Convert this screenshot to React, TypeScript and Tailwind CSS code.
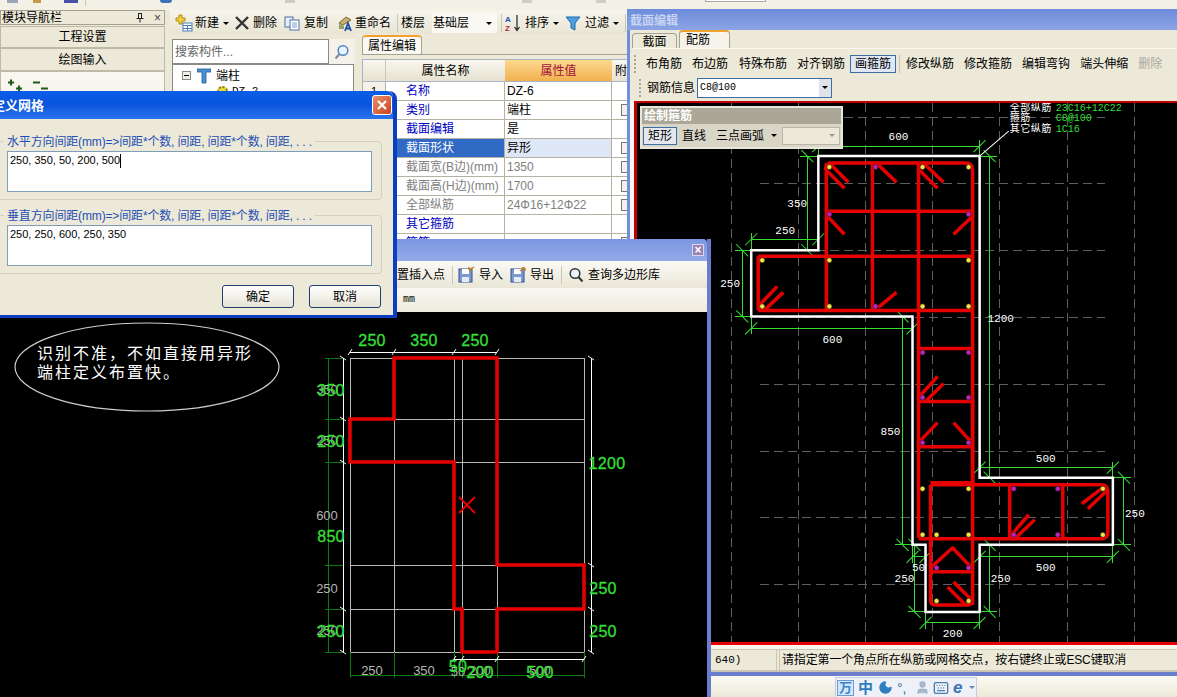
import { Keyboard, Moon, User } from "lucide-react";

const GREEN = "#35dd35";
const RED = "#e60000";

function Arrow() {
  return <div className="h-0 w-0 border-x-[3px] border-t-[3px] border-x-transparent border-t-black" />;
}

function Sep({ className = "" }: { className?: string }) {
  return <div className={`h-[18px] w-px shrink-0 bg-[#c9c6b4] ${className}`} />;
}

function Gripper() {
  return <div className="h-[18px] w-[2px] shrink-0 border-l-2 border-dotted border-[#a8a694]" />;
}

/* toolbar icons */
function NewIcon() {
  return (
    <svg width="18" height="18" viewBox="0 0 18 18">
      <path d="M4 1h3v3h3v3H7v3H4V7H1V4h3z" fill="#f4d03f" stroke="#b08a10" />
      <rect x="8" y="9" width="9" height="8" fill="#fff" stroke="#4a7fb5" />
      <path d="M8 11.500h9M8 14.500h9M12.500 11.500v5" stroke="#4a7fb5" />
    </svg>
  );
}

function DeleteIcon() {
  return (
    <svg width="14" height="14" viewBox="0 0 14 14">
      <path d="M1 1l12 12M13 1L1 13" stroke="#333" strokeWidth="2.4" />
    </svg>
  );
}

function CopyIcon() {
  return (
    <svg width="16" height="15" viewBox="0 0 16 15">
      <rect x="1" y="1" width="8" height="10" fill="#e8eefb" stroke="#4a6fa5" />
      <rect x="6" y="4" width="9" height="10" fill="#fff" stroke="#4a6fa5" />
      <path d="M8 7h5M8 9h5M8 11h5" stroke="#7d9bc8" />
    </svg>
  );
}

function RenameIcon() {
  return (
    <svg width="17" height="17" viewBox="0 0 17 17">
      <path d="M3 8l7-6 5 3-8 5z" fill="#c9b36a" stroke="#7a6a30" />
      <path d="M3 9l5 2v3H3z" fill="#8da06a" />
      <path d="M9 16l3-8 3 8M10 13.500h4" stroke="#1f4fa5" strokeWidth="1.800" fill="none" />
    </svg>
  );
}

function SortIcon() {
  return (
    <svg width="16" height="18" viewBox="0 0 16 18">
      <text x="0" y="8" fontSize="8" fontWeight="700" fill="#2050b0" fontFamily="Liberation Sans, sans-serif">A</text>
      <text x="0" y="17" fontSize="8" fontWeight="700" fill="#b03030" fontFamily="Liberation Sans, sans-serif">Z</text>
      <path d="M12 1v15M9.500 13l2.500 3.500 2.500-3.500" stroke="#222" strokeWidth="1.200" fill="none" />
    </svg>
  );
}

function FunnelIcon() {
  return (
    <svg width="16" height="15" viewBox="0 0 16 15">
      <path d="M1 1h14L10 7v7L6 12V7z" fill="#4aa0e0" stroke="#1d6aa5" />
    </svg>
  );
}

function FloppyIcon({ out }: { out?: boolean }) {
  return (
    <svg width="17" height="17" viewBox="0 0 17 17">
      <rect x="1" y="3" width="13" height="13" fill="#7d9ad0" stroke="#2f4d8a" />
      <rect x="4" y="3" width="7" height="5" fill="#fff" />
      <rect x="4" y="11" width="7" height="5" fill="#e6ebf5" />
      <path d={out ? "M10 5l5-3M15 2h-3M15 2v3" : "M16 1l-5 3M11 4h3M11 4V1"} stroke="#c07820" strokeWidth="1.300" fill="none" />
    </svg>
  );
}

function LensIcon({ ring = "#333", handle = "#333" }: { ring?: string; handle?: string }) {
  return (
    <svg width="16" height="16" viewBox="0 0 16 16">
      <circle cx="9" cy="6.500" r="4.800" fill="#eaf3fb" stroke={ring} strokeWidth="1.500" />
      <path d="M5.500 10L1.500 14.500" stroke={handle} strokeWidth="2" />
    </svg>
  );
}

function TopStrip() {
  return (
    <div className="relative h-[10px] shrink-0 bg-[#f3f1e6]">
      <div className="absolute left-[7px] top-0 h-[3px] w-[11px] bg-[#9aa6b8]" />
      <div className="absolute left-[33px] top-0 h-[3px] w-[8px] bg-[#c49a48]" />
      <div className="absolute left-[64px] top-0 h-[3px] w-[14px] bg-[#4a50a8]" />
      <div className="absolute left-[85px] top-0 h-[6px] w-px bg-[#c9c6b4]" />
      <div className="absolute left-[160px] top-0 h-[3px] w-[12px] rounded-b bg-[#3b74b5]" />
      <div className="absolute left-[285px] top-0 h-[3px] w-[10px] bg-[#cfcdc2]" />
      <div className="absolute left-[522px] top-0 h-[3px] w-[10px] bg-[#cfcdc2]" />
      <div className="absolute left-[596px] top-0 h-[3px] w-[10px] bg-[#cfcdc2]" />
      <div className="absolute left-[705px] top-0 h-[2px] w-[61px] border-b border-x border-[#aaa] bg-white" />
    </div>
  );
}

function NavPanel() {
  return (
    <div className="flex w-[165px] shrink-0 flex-col">
      <div className="flex h-[15px] items-center border border-[#a5a290] bg-[#ece9d8] pl-px text-[12px] leading-none">
        <span className="flex-1">模块导航栏</span>
        <svg className="mr-[10px]" width="8" height="10" viewBox="0 0 8 10">
          <path d="M2 0.500h4M2.500 0.500v5M5.500 0.500v5M0.500 5.500h7M4 5.500v4" stroke="#222" fill="none" />
        </svg>
        <span className="mr-[3px] text-[12px] text-[#444]">×</span>
      </div>
      <div className="mt-px flex h-[22px] items-center justify-center border border-[#bdbaa6] bg-[#ece9d8] text-[12px] leading-none">工程设置</div>
      <div className="flex h-[23px] items-center justify-center border border-[#bdbaa6] bg-[#ece9d8] text-[12px] leading-none">绘图输入</div>
      <div className="flex flex-1 gap-[7px] border border-[#bdbaa6] bg-gradient-to-b from-[#f8f6ee] to-[#ece9d8] pl-[6px] pt-[6px]">
        <svg width="18" height="16" viewBox="0 0 18 16">
          <path d="M1 4.500h6M4 1.500v6M9 10.500h6M12 7.500v6" stroke="#1e5a1e" strokeWidth="2" />
        </svg>
        <svg width="18" height="16" viewBox="0 0 18 16">
          <path d="M1 4.500h7M9 10.500h7" stroke="#1e5a1e" strokeWidth="2" />
        </svg>
      </div>
    </div>
  );
}

function MainToolbar() {
  return (
    <div className="flex h-[24px] shrink-0 items-center bg-gradient-to-b from-[#f7f5ec] to-[#e8e5d4] pl-[5px] pt-[2px] text-[12px] leading-none">
      <NewIcon />
      <span className="ml-[2px]">新建</span>
      <div className="ml-[4px]"><Arrow /></div>
      <div className="ml-[6px]"><DeleteIcon /></div>
      <span className="ml-[4px]">删除</span>
      <div className="ml-[7px]"><CopyIcon /></div>
      <span className="ml-[4px]">复制</span>
      <div className="ml-[8px]"><RenameIcon /></div>
      <span className="ml-[2px]">重命名</span>
      <Sep className="ml-[6px]" />
      <span className="ml-[3px]">楼层</span>
      <div className="ml-[7px] flex h-[20px] w-[65px] items-center justify-between bg-[#f9f8f2] pl-px pr-[5px]">
        <span>基础层</span>
        <Arrow />
      </div>
      <Sep className="ml-[4px]" />
      <div className="ml-[3px]"><SortIcon /></div>
      <span className="ml-[4px]">排序</span>
      <div className="ml-[4px]"><Arrow /></div>
      <div className="ml-[6px]"><FunnelIcon /></div>
      <span className="ml-[4px]">过滤</span>
      <div className="ml-[4px]"><Arrow /></div>
      <Sep className="ml-[6px]" />
    </div>
  );
}

function TreePanel() {
  return (
    <div className="flex w-[187px] shrink-0 flex-col pl-[2px] pt-[5px]">
      <div className="flex h-[25px] items-stretch">
        <div className="flex w-[157px] items-center border border-[#8a8a80] bg-white pl-[2px] text-[12px] leading-none text-[#666]">搜索构件...</div>
        <div className="flex w-[26px] items-center justify-center bg-[#f4f2e8]">
          <LensIcon ring="#4a88c8" handle="#7a8a9a" />
        </div>
      </div>
      <div className="mr-[3px] flex-1 border border-[#8a8a80] bg-white pl-[9px] pt-[3px] text-[12px] leading-none">
        <div className="flex h-[15px] items-center">
          <div className="flex h-[9px] w-[9px] items-center justify-center border border-[#888] bg-[#f0efe8]">
            <div className="h-px w-[5px] bg-black" />
          </div>
          <svg className="ml-[6px]" width="14" height="16" viewBox="0 0 14 16">
            <path d="M0 1h14v3H9v11H5V4H0z" fill="#4a90d0" stroke="#1c5a96" strokeWidth="0.800" />
          </svg>
          <span className="ml-[5px]">端柱</span>
        </div>
        <div className="ml-[35px] mt-[1px] flex h-[15px] items-center">
          <div className="h-[11px] w-[11px] rounded-full border-2 border-dotted border-[#8a7a10] bg-[#e8d840]" />
          <span className="ml-[4px] font-['Liberation_Mono',monospace] text-[11px]">DZ-2</span>
        </div>
      </div>
    </div>
  );
}

const PROPERTY_ROWS = [
  { name: "名称", value: "DZ-6", kind: "link", check: false },
  { name: "类别", value: "端柱", kind: "link", check: true },
  { name: "截面编辑", value: "是", kind: "link", check: false },
  { name: "截面形状", value: "异形", kind: "selected", check: true },
  { name: "截面宽(B边)(mm)", value: "1350", kind: "muted", check: true },
  { name: "截面高(H边)(mm)", value: "1700", kind: "muted", check: true },
  { name: "全部纵筋", value: "24Φ16+12Φ22", kind: "muted", check: true },
  { name: "其它箍筋", value: "", kind: "link", check: false },
  { name: "箍筋", value: "", kind: "link", check: true },
];

function PropertyPanel() {
  return (
    <div className="flex flex-1 flex-col pl-[5px] pt-px text-[12px] leading-none">
      <div className="flex h-[20px] border-b border-[#a5a290]">
        <div className="flex w-[60px] items-center justify-center rounded-t border border-b-0 border-[#a5a290] border-t-2 border-t-[#f0a030] bg-[#f9f8f2]">属性编辑</div>
      </div>
      <div className="mt-[4px] flex h-[23px] border-y border-l border-[#a9b4c4]">
        <div className="w-[23px] border-r border-[#c9c6b4] bg-gradient-to-b from-[#f8f6ee] to-[#e6e3d2]" />
        <div className="flex w-[119px] items-center justify-center bg-gradient-to-b from-[#f8f6ee] to-[#e6e3d2]">属性名称</div>
        <div className="flex w-[107px] items-center justify-center bg-gradient-to-b from-[#fbd98f] to-[#f2b04e] text-[#a0103a]">属性值</div>
        <div className="flex flex-1 items-center bg-gradient-to-b from-[#f8f6ee] to-[#e6e3d2] pl-[3px]">附加</div>
      </div>
      {PROPERTY_ROWS.map((row, i) => (
        <div key={row.name} className="flex h-[19px] border-b border-l border-[#b4b2a4] bg-white">
          <div className="flex w-[23px] items-center justify-center border-r border-[#b4b2a4] bg-[#f4f2e8] text-[11px]">{i + 1}</div>
          <div
            className={
              row.kind === "selected"
                ? "flex w-[119px] items-center border-r border-[#b4b2a4] bg-[#316ac5] pl-[20px] text-white"
                : row.kind === "muted"
                  ? "flex w-[119px] items-center border-r border-[#b4b2a4] pl-[20px] text-[#808080]"
                  : "flex w-[119px] items-center border-r border-[#b4b2a4] pl-[20px] text-[#0000c0]"
            }
          >
            {row.name}
          </div>
          <div
            className={
              row.kind === "selected"
                ? "flex w-[107px] items-center border-r border-[#b4b2a4] bg-[#dde7f5] pl-[2px]"
                : row.kind === "muted"
                  ? "flex w-[107px] items-center border-r border-[#b4b2a4] pl-[2px] text-[#808080]"
                  : "flex w-[107px] items-center border-r border-[#b4b2a4] pl-[2px]"
            }
          >
            {row.value}
          </div>
          <div className="flex flex-1 items-center pl-[9px]">
            {row.check && <div className="h-[12px] w-[12px] shrink-0 border border-[#777] bg-[#f4f2e8]" />}
          </div>
        </div>
      ))}
    </div>
  );
}

/* dimension line in the rebar drawing: ext is where the witness lines stop */
const RIGHT_DIMS = [
  { x1: 818, y1: 147, x2: 979, y2: 147, ext: 157 },
  { x1: 807, y1: 157, x2: 807, y2: 251, ext: 818 },
  { x1: 751, y1: 240, x2: 818, y2: 240, ext: 251 },
  { x1: 742, y1: 251, x2: 742, y2: 317, ext: 751 },
  { x1: 751, y1: 329, x2: 912, y2: 329, ext: 317 },
  { x1: 989, y1: 157, x2: 989, y2: 478, ext: 979 },
  { x1: 902, y1: 317, x2: 902, y2: 545, ext: 912 },
  { x1: 979, y1: 468, x2: 1112, y2: 468, ext: 478 },
  { x1: 1123, y1: 478, x2: 1123, y2: 545, ext: 1112 },
  { x1: 979, y1: 557, x2: 1112, y2: 557, ext: 545 },
  { x1: 912, y1: 557, x2: 925, y2: 557, ext: 545 },
  { x1: 914, y1: 545, x2: 914, y2: 612, ext: 925 },
  { x1: 989, y1: 545, x2: 989, y2: 612, ext: 979 },
  { x1: 925, y1: 623, x2: 979, y2: 623, ext: 612 },
];

const RIGHT_LABELS = [
  ["600", 898, 141],
  ["350", 797, 208],
  ["250", 785, 235],
  ["250", 730, 288],
  ["600", 832, 344],
  ["1200", 1000, 323],
  ["850", 890, 435],
  ["500", 1045, 462],
  ["250", 1134, 517],
  ["500", 1045, 571],
  ["50", 918, 571],
  ["250", 904, 582],
  ["250", 1000, 582],
  ["200", 952, 637],
] as const;

const STIRRUPS = [
  "M825 171Q825 164 832 164H965Q972 164 972 171V485M826 164V311M872 164V311M918 164V538M826 212H972M758 257H972M758 311H972M758 257V311",
  "M918 349H972M918 402H972M918 447H972M972 400V605M930 483H972M930 485H1100Q1107 485 1107 492V532Q1107 539 1100 539H918M1009 485V539M1062 485V539M930 485V600Q930 605 935 605H967Q972 605 972 600M930 572H972",
  "M828 163L848 183M827 172L844 189M875 163L896 183M922 163L943 183M919 171L937 189M827 217L844 235M972 217L953 235M758 307L777 287M765 310L783 293M878 308L896 293",
  "M918 398L937 377M925 402L943 384M918 443L937 423M971 443L953 423M1102 488L1081 504M1107 490L1087 509M1009 537L1028 515M1015 538L1034 520M930 568L952 548L971 568M947 587L965 605M953 582L971 600",
];

const YELLOW_DOTS = [
  [829, 168], [922, 168], [968, 168], [762, 261], [829, 261], [968, 261], [762, 307], [829, 307], [922, 307], [968, 307],
  [922, 489], [968, 489], [1102, 489], [922, 535], [936, 535], [968, 535], [1102, 535], [936, 601], [968, 601],
];
const MAGENTA_DOTS = [
  [875, 168], [829, 215], [968, 215], [875, 307], [922, 353], [968, 353], [922, 398], [968, 398], [922, 443], [968, 443],
  [1013, 489], [1057, 489], [1013, 535], [1057, 535], [936, 568], [968, 568],
];

function RebarDrawing() {
  const grid = [731, 798, 865, 932, 999, 1067, 1134];
  const rows = [118, 184, 251, 318, 385, 452, 518, 585];
  return (
    <svg className="block h-full w-full" viewBox="637 104 540 538" preserveAspectRatio="xMinYMin slice">
      <g stroke="#5f5f5f" strokeDasharray="9 5" shapeRendering="crispEdges">
        {grid.map((x) => <line key={x} x1={x} y1={104} x2={x} y2={642} />)}
        {rows.map((y) => <line key={y} x1={760} y1={y} x2={1104} y2={y} />)}
      </g>
      <g stroke={GREEN} shapeRendering="crispEdges">
        {RIGHT_DIMS.map((d) => {
          const horizontal = d.y1 === d.y2;
          return (
            <g key={`${d.x1}-${d.y1}-${d.x2}`}>
              <line x1={d.x1} y1={d.y1} x2={d.x2} y2={d.y2} />
              {horizontal ? (
                <>
                  <line x1={d.x1} y1={d.y1 + (d.ext > d.y1 ? -6 : 6)} x2={d.x1} y2={d.ext} />
                  <line x1={d.x2} y1={d.y1 + (d.ext > d.y1 ? -6 : 6)} x2={d.x2} y2={d.ext} />
                </>
              ) : (
                <>
                  <line x1={d.x1 + (d.ext > d.x1 ? -7 : 7)} y1={d.y1} x2={d.ext} y2={d.y1} />
                  <line x1={d.x1 + (d.ext > d.x1 ? -7 : 7)} y1={d.y2} x2={d.ext} y2={d.y2} />
                </>
              )}
            </g>
          );
        })}
      </g>
      <g stroke={GREEN}>
        {RIGHT_DIMS.map((d) => {
          const horizontal = d.y1 === d.y2;
          const k = `${d.x1}-${d.y1}-${d.x2}`;
          return horizontal ? (
            <g key={k}>
              <line x1={d.x1 - 6} y1={d.y1 + 6} x2={d.x1 + 6} y2={d.y1 - 6} />
              <line x1={d.x2 - 6} y1={d.y2 + 6} x2={d.x2 + 6} y2={d.y2 - 6} />
            </g>
          ) : (
            <g key={k}>
              <line x1={d.x1 - 6} y1={d.y1 - 6} x2={d.x1 + 6} y2={d.y1 + 6} />
              <line x1={d.x2 - 6} y1={d.y2 - 6} x2={d.x2 + 6} y2={d.y2 + 6} />
            </g>
          );
        })}
      </g>
      <path d="M818 157H979V478H1112V545H979V612H925V545H912V317H751V251H818Z" fill="none" stroke="#fff" strokeWidth="2.500" />
      <g fill="none" stroke={RED} strokeWidth="3.500" strokeLinejoin="round">
        {STIRRUPS.map((d) => <path key={d} d={d} />)}
      </g>
      {YELLOW_DOTS.map(([x, y]) => <circle key={`y${x}-${y}`} cx={x} cy={y} r="2.500" fill="#f5e642" stroke="#222" strokeWidth="0.600" />)}
      {MAGENTA_DOTS.map(([x, y]) => <circle key={`m${x}-${y}`} cx={x} cy={y} r="2.500" fill="#c020c0" stroke="#222" strokeWidth="0.600" />)}
      <path d="M979 157L1008 132" stroke="#fff" />
      <g fill="#fff" className="font-['Liberation_Mono',monospace] text-[11px]" textAnchor="middle">
        {RIGHT_LABELS.map(([t, x, y]) => <text key={`${t}-${x}-${y}`} x={x} y={y}>{t}</text>)}
      </g>
      <g fill="#fff" className="font-['Noto_Sans_CJK_SC',sans-serif] text-[10px]" letterSpacing="0.500">
        <text x={1009} y={112}>全部纵筋</text>
        <text x={1009} y={122}>箍筋</text>
        <text x={1009} y={133}>其它纵筋</text>
      </g>
      <g fill={GREEN} className="font-['Liberation_Mono',monospace] text-[10px]">
        <text x={1055} y={112}>23C16+12C22</text>
        <text x={1055} y={122}>C8@100</text>
        <text x={1055} y={133}>1C16</text>
      </g>
    </svg>
  );
}

const GRID_X = [350, 394, 454, 462, 497, 584];
const GRID_Y = [358, 419, 462, 565, 609, 652];

const GREEN_TEXT = [
  ["250", 372, 346], ["350", 424, 346], ["250", 475, 346],
  ["350", 331, 396], ["250", 331, 447], ["850", 331, 542], ["250", 331, 637],
  ["1200", 607, 469], ["250", 603, 594], ["250", 603, 637],
  ["50", 458, 672], ["200", 480, 678], ["500", 540, 678],
] as const;

const GREY_TEXT = [
  ["350", 327, 394], ["250", 327, 445], ["600", 327, 520], ["250", 327, 593], ["250", 327, 635],
  ["250", 372, 675], ["350", 424, 675], ["50", 458, 676], ["200", 480, 675], ["500", 540, 675],
] as const;

function PolygonDrawing() {
  return (
    <svg className="block h-full w-full" viewBox="0 312 707 385">
      <ellipse cx="147" cy="367" rx="132" ry="44" fill="none" stroke="#ccc" strokeWidth="1.200" />
      <g fill="#fff" className="font-['Noto_Sans_CJK_SC',sans-serif] text-[16px]" letterSpacing="2">
        <text x="37" y="359">{"识别不准\uFF0C不如直接用异形"}</text>
        <text x="37" y="378">端柱定义布置快。</text>
      </g>
      <g stroke="#b8b8b8" shapeRendering="crispEdges">
        {GRID_X.map((x) => <line key={x} x1={x} y1={358} x2={x} y2={652} />)}
        {GRID_Y.map((y) => <line key={y} x1={350} y1={y} x2={584} y2={y} />)}
      </g>
      <g stroke="#0c7a0c" shapeRendering="crispEdges">
        <line x1={328} y1={358} x2={328} y2={652} />
        <line x1={350} y1={675} x2={584} y2={675} />
        {GRID_Y.map((y) => <line key={y} x1={325} y1={y} x2={343} y2={y} />)}
        {[350, 394, 454, 462, 497, 584].map((x) => <line key={x} x1={x} y1={652} x2={x} y2={678} />)}
      </g>
      <g stroke="#fff" shapeRendering="crispEdges">
        <line x1={350} y1={352} x2={497} y2={352} />
        <line x1={454} y1={659} x2={584} y2={659} />
        <line x1={343} y1={358} x2={343} y2={652} />
        <line x1={591} y1={358} x2={591} y2={652} />
      </g>
      <g stroke="#fff">
        {[350, 394, 454, 497].map((x) => <line key={x} x1={x - 2} y1={355} x2={x + 2} y2={349} />)}
        {[454, 462, 497, 584].map((x) => <line key={x} x1={x - 2} y1={662} x2={x + 2} y2={656} />)}
        {[358, 419, 462, 609, 652].map((y) => <line key={y} x1={340} y1={y - 2} x2={346} y2={y + 2} />)}
        {[358, 565, 609, 652].map((y) => <line key={y} x1={588} y1={y - 2} x2={594} y2={y + 2} />)}
      </g>
      <path d="M394 358H497V565H584V609H497V652H462V609H454V462H350V419H394Z" fill="none" stroke={RED} strokeWidth="3.500" />
      <path d="M459 497L475 513M475 497L459 513" stroke={RED} strokeWidth="2" />
      <g fill="#b5b5b5" className="font-['Liberation_Sans',sans-serif] text-[13px]" textAnchor="middle">
        {GREY_TEXT.map(([t, x, y]) => <text key={`${t}-${x}-${y}`} x={x} y={y}>{t}</text>)}
      </g>
      <g fill={GREEN} stroke={GREEN} strokeWidth="0.350" className="font-['Liberation_Sans',sans-serif] text-[16px]" textAnchor="middle" letterSpacing="0.300">
        {GREEN_TEXT.map(([t, x, y]) => <text key={`${t}-${x}-${y}`} x={x} y={y}>{t}</text>)}
      </g>
    </svg>
  );
}

function PolygonWindow() {
  return (
    <div className="absolute bottom-0 left-0 top-[239px] flex w-[711px] flex-col border-r-4 border-[#6a7ccc] text-[12px] leading-none">
      <div className="flex h-[22px] shrink-0 items-center justify-end rounded-tr bg-gradient-to-b from-[#7b96e2] to-[#94aae8] pr-[3px]">
        <div className="flex h-[12px] w-[12px] items-center justify-center border border-[#d8d8ec] bg-[#9a80b8] text-[12px] font-bold text-white">×</div>
      </div>
      <div className="flex h-[27px] shrink-0 items-center bg-gradient-to-b from-[#fbfaf4] to-[#e9e6d6] pl-[397px]">
        <span>置插入点</span>
        <Sep className="ml-[7px]" />
        <div className="ml-[5px]"><FloppyIcon /></div>
        <span className="ml-[4px]">导入</span>
        <div className="ml-[7px]"><FloppyIcon out /></div>
        <span className="ml-[3px]">导出</span>
        <Sep className="ml-[7px]" />
        <div className="ml-[6px] -scale-x-100"><LensIcon /></div>
        <span className="ml-[4px]">查询多边形库</span>
      </div>
      <div className="flex h-[24px] shrink-0 items-center bg-gradient-to-b from-[#f9f8f2] to-[#eeebdc] pl-[403px] font-['Liberation_Mono',monospace] text-[10px]">mm</div>
      <div className="min-h-0 flex-1 bg-black">
        <PolygonDrawing />
      </div>
    </div>
  );
}

function GridGroup({ legend, value, caret }: { legend: string; value: string; caret?: boolean }) {
  return (
    <div className="relative -ml-[3px] h-[59px] w-[385px] rounded border border-[#d3d0bf] pl-[9px] pt-[9px]">
      <div className="absolute -top-[7px] left-[6px] bg-[#ece9d8] px-[3px] text-[12px] leading-[14px] tracking-[-0.15px] whitespace-nowrap text-[#1f4fb5]">{legend}</div>
      <div className="flex h-[41px] w-[365px] items-start border border-[#7f9db9] bg-white pl-[2px] pt-[2px] text-[11px] leading-[13px]">
        <span>{value}</span>
        {caret && <div className="h-[14px] w-px bg-black" />}
      </div>
    </div>
  );
}

function GridDialog() {
  return (
    <div className="absolute left-0 top-[91px] flex h-[227px] w-[397px] flex-col rounded-tr-lg border-b-[3px] border-r-[4px] border-[#0a3fc0] bg-[#ece9d8]">
      <div className="flex h-[28px] shrink-0 items-center justify-between overflow-hidden rounded-tr-md bg-gradient-to-b from-[#0a5de8] via-[#0a55dc] to-[#2a74ee] pr-[1px]">
        <span className="-ml-[8px] text-[13px] font-bold leading-none text-white">定义网格</span>
        <div className="flex h-[20px] w-[20px] items-center justify-center rounded-[3px] border border-white bg-gradient-to-br from-[#e8906a] to-[#c8401c]">
          <svg width="12" height="12" viewBox="0 0 12 12">
            <path d="M2 2l8 8M10 2l-8 8" stroke="#fff" strokeWidth="2.200" />
          </svg>
        </div>
      </div>
      <div className="mt-[22px] flex flex-col gap-[15px]">
        <GridGroup legend="水平方向间距(mm)=>间距*个数, 间距, 间距*个数, 间距, . . ." value="250, 350, 50, 200, 500" caret />
        <GridGroup legend="垂直方向间距(mm)=>间距*个数, 间距, 间距*个数, 间距, . . ." value="250, 250, 600, 250, 350" />
      </div>
      <div className="mt-[11px] flex justify-end gap-[15px] pr-[12px]">
        <div className="flex h-[23px] w-[72px] items-center justify-center rounded-[3px] border border-[#1f3f6f] bg-gradient-to-b from-white to-[#e6e3d6] text-[12px] leading-none">确定</div>
        <div className="flex h-[23px] w-[72px] items-center justify-center rounded-[3px] border border-[#1f3f6f] bg-gradient-to-b from-white to-[#e6e3d6] text-[12px] leading-none">取消</div>
      </div>
    </div>
  );
}

function SectionToolbar() {
  return (
    <div className="flex h-[28px] shrink-0 items-center gap-[10px] pl-[1px] pt-[2px] text-[12px] leading-none">
      <Gripper />
      <span>布角筋</span>
      <span>布边筋</span>
      <span className="ml-px">特殊布筋</span>
      <span>对齐钢筋</span>
      <span className="-ml-[5px] flex h-[18px] items-center border border-[#3a6ea5] bg-[#dfe7f3] px-[4px]">画箍筋</span>
      <Sep className="-ml-[7px] -mr-[4px]" />
      <span>修改纵筋</span>
      <span>修改箍筋</span>
      <span>编辑弯钩</span>
      <span>端头伸缩</span>
      <span className="text-[#a8a8a0]">删除</span>
    </div>
  );
}

function HoopBox() {
  return (
    <div className="absolute left-[3px] top-[3px] h-[43px] w-[203px] border-2 border-[#e8e6da] bg-[#d9d6c8] text-[12px] leading-none">
      <div className="flex h-[16px] items-center bg-[#aaa796] pl-[2px] font-bold text-white">绘制箍筋</div>
      <div className="flex h-[23px] items-center pl-[1px]">
        <span className="flex h-[18px] w-[34px] items-center justify-center border border-[#3a6ea5] bg-[#e4e8ee]">矩形</span>
        <span className="ml-[5px]">直线</span>
        <span className="ml-[10px]">三点画弧</span>
        <div className="ml-[7px]"><Arrow /></div>
        <div className="ml-[5px] flex h-[18px] w-[58px] items-center justify-end border border-[#b8b6a8] bg-[#ece9d8] pr-[4px]">
          <div className="h-0 w-0 border-x-[3px] border-t-[3px] border-x-transparent border-t-[#999]" />
        </div>
      </div>
    </div>
  );
}

function ImeBar() {
  return (
    <div className="ml-[835px] flex h-[20px] w-[142px] items-center border border-b-0 border-[#c4ccdf] bg-[#eef1f8] pl-px">
      <div className="flex h-[16px] w-[17px] items-center justify-center border border-[#6a9bd8] bg-[#d5e6fa] text-[13px] font-bold leading-none text-[#3a86c8]">万</div>
      <span className="ml-[4px] w-[15px] text-[15px] font-bold leading-none text-[#2f7ebf]">中</span>
      <Moon size={15} className="ml-[5px] fill-[#2f7ebf] text-[#2f7ebf]" />
      <span className="ml-[4px] w-[14px] text-[14px] leading-none text-[#2f6ea0]">°,</span>
      <User size={15} className="ml-[4px] fill-[#aabccf] text-[#9db0c4]" />
      <Keyboard size={16} className="ml-[3px] text-[#4a7cac]" />
      <span className="ml-[4px] w-[12px] font-['Liberation_Sans',sans-serif] text-[17px] font-bold italic leading-none text-[#3a76b5]">e</span>
      <div className="ml-[4px] h-0 w-0 border-x-[3px] border-t-[3px] border-x-transparent border-t-[#6a87a8]" />
    </div>
  );
}

function SectionWindow() {
  return (
    <div className="absolute bottom-0 left-[627px] right-0 top-[9px] flex flex-col border-l-[3px] border-[#6f8fdc] bg-[#ece9d8]">
      <div className="-ml-[3px] flex h-[21px] shrink-0 items-center bg-gradient-to-b from-[#6d8cdc] to-[#8ca4e4] pl-[3px] pt-[2px] text-[12px] font-bold leading-none text-[#c7d5f2]">截面编辑</div>
      <div className="flex h-[18px] shrink-0 items-end pl-[2px] text-[12px] leading-none">
        <div className="flex h-[15px] w-[45px] items-center justify-center rounded-t border border-b-0 border-[#a5a290] bg-[#ece9d8] pt-px">截面</div>
        <div className="ml-[2px] flex h-[18px] w-[51px] items-center rounded-t border border-b-0 border-[#a5a290] border-t-2 border-t-[#f0a030] bg-[#f6f4ea] pl-[6px]">配筋</div>
      </div>
      <div className="ml-[3px] border-t border-[#f8f7f0]">
        <SectionToolbar />
        <div className="flex h-[21px] items-center pl-[6px] text-[12px] leading-none">
          <Gripper />
          <span className="ml-[6px]">钢筋信息</span>
          <div className="ml-[2px] flex h-[20px] w-[135px] items-center justify-between border border-[#3a6ea5] bg-white pl-[2px]">
            <span className="font-['Liberation_Mono',monospace] text-[10px]">C8@100</span>
            <div className="flex h-full w-[12px] items-center justify-center bg-[#dfe3ea]"><Arrow /></div>
          </div>
        </div>
      </div>
      <div className="mt-[3px] flex min-h-0 flex-1 flex-col bg-[#f7f6ee] pl-[4px]">
        <div className="relative min-h-0 flex-1 border-l-[3px] border-t-2 border-[#c00000] bg-black">
          <RebarDrawing />
          <HoopBox />
        </div>
      </div>
      <div className="h-[3px] shrink-0 bg-[#e60000]" />
      <div className="h-[5px] shrink-0 border-b border-[#c9c6b4] bg-[#f7f6ee]" />
      <div className="ml-[81px] flex h-[20px] shrink-0 items-center text-[12px] leading-none">
        <div className="flex h-full w-[66px] items-center border-r border-[#c9c6b4] pl-[4px] font-['Liberation_Mono',monospace] text-[11px]">640)</div>
        <div className="ml-[2px] flex h-full flex-1 items-center border-l border-[#c9c6b4] pl-[2px] tracking-[-0.15px]">{"请指定第一个角点所在纵筋或网格交点\uFF0C按右键终止或ESC键取消"}</div>
      </div>
      <div className="h-[2px] shrink-0 bg-[#c9c6b4]" />
      <div className="h-[4px] shrink-0 bg-[#6a7ccc]" />
      <div className="h-[21px] shrink-0 bg-gradient-to-b from-[#fbfaf4] to-[#ece9d8] pt-px">
        <div className="-ml-[630px]"><ImeBar /></div>
      </div>
    </div>
  );
}

export default function App() {
  return (
    <div className="relative flex h-[697px] w-[1177px] flex-col overflow-hidden bg-[#ece9d8] font-['Liberation_Sans','Noto_Sans_CJK_SC',sans-serif] text-black">
      <TopStrip />
      <div className="flex min-h-0 flex-1">
        <NavPanel />
        <div className="ml-[5px] flex min-w-0 flex-1 flex-col">
          <MainToolbar />
          <div className="flex min-h-0 flex-1">
            <TreePanel />
            <PropertyPanel />
          </div>
        </div>
      </div>
      <SectionWindow />
      <PolygonWindow />
      <GridDialog />
    </div>
  );
}
